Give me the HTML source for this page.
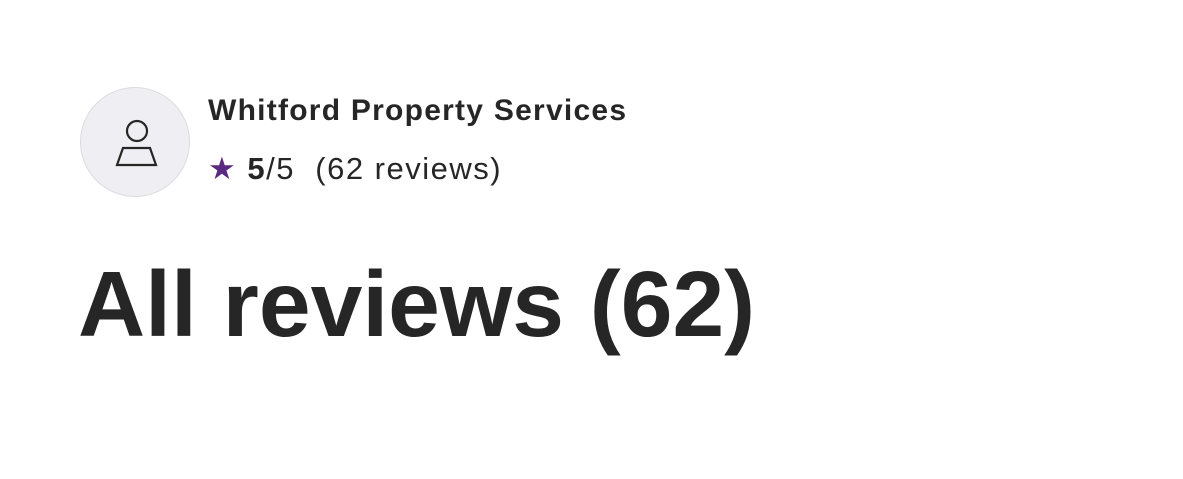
<!DOCTYPE html>
<html><head><style>
body{margin:0;width:1183px;height:479px;background:#fff;font-family:"Liberation Sans",sans-serif;color:#262626;position:relative;overflow:hidden}
.av{position:absolute;left:80px;top:87px;width:108px;height:108px;border-radius:50%;background:#efeff3;border:1px solid #dcdce0}
.name{position:absolute;left:208px;top:94px;font-size:30px;font-weight:bold;white-space:nowrap;letter-spacing:1.25px}
.rate{position:absolute;left:208px;top:151px;font-size:31px;white-space:nowrap;letter-spacing:1.5px}
.star{color:#5a2a82}
h1{position:absolute;left:78px;top:253px;margin:0;font-size:93px;font-weight:bold;letter-spacing:0px;white-space:nowrap;line-height:1.1}
</style></head><body>
<div class="av"><svg width="108" height="108" viewBox="0 0 108 108"><circle cx="56" cy="43" r="10" fill="none" stroke="#262626" stroke-width="2.2"/><path d="M42 60 L69 60 L75 77 L36 77 Z" fill="none" stroke="#262626" stroke-width="2.2" stroke-linejoin="miter"/></svg></div>
<div class="name">Whitford Property Services</div>
<div class="rate"><span class="star">★</span> <b>5</b>/5&nbsp; (62 reviews)</div>
<h1>All reviews (62)</h1>
</body></html>
